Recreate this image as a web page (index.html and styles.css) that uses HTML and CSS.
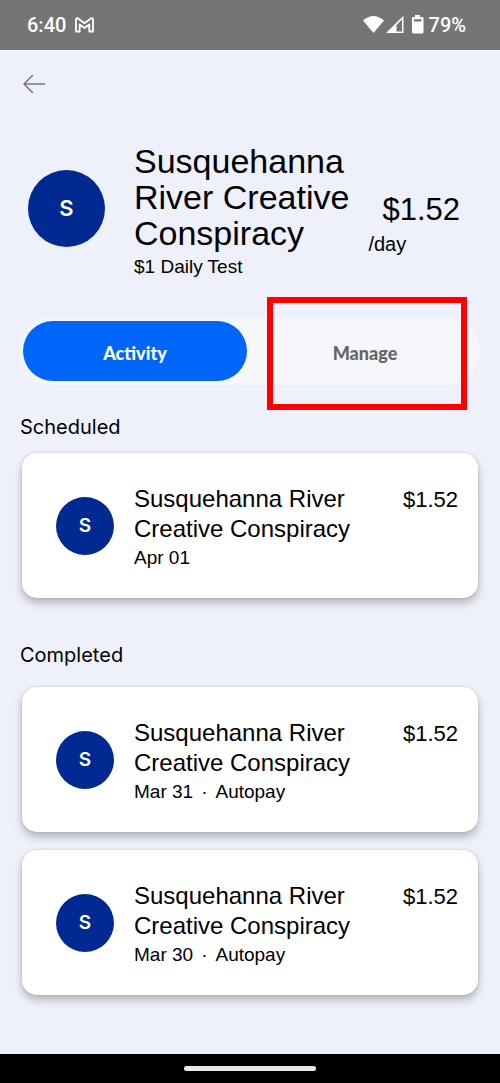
FILE: index.html
```html
<!DOCTYPE html>
<html lang="en">
<head>
<meta charset="utf-8">
<meta name="viewport" content="width=device-width, initial-scale=1">
<title>Automatic payment</title>
<link rel="stylesheet" href="styles.css">
</head>
<body>
<div class="status">
  <span>6:40</span>
  <svg class="mail" width="19" height="16" viewBox="0 0 19 16" fill="none" stroke="#fff" stroke-width="1.8" stroke-linejoin="round" aria-hidden="true"><path d="M1 3Q1 .9 2.8 1.2L9.5 6.3 16.2 1.2Q18 .9 18 3V14.5H14.3V7.4L9.5 11 4.7 7.4V14.5H1Z"/></svg>
  <svg class="signals" width="62" height="20" viewBox="0 0 62 20" fill="#fff" aria-hidden="true"><path d="M0 5.5Q10.5-3.5 21 5.5L10.5 18Z"/><path fill-rule="evenodd" d="M23 18L40.500.8V18ZM33.500 16.500H39V4.500L33.500 10Z"/><path fill-rule="evenodd" d="M52 0H57V2H59.500Q60.500 2 60.500 3V17Q60.500 18.500 59 18.500H50.500Q49 18.500 49 17V3Q49 2 50 2H52ZM51 4.200V6.500H58.500V4.200Z"/></svg>
  <span class="charge">79%</span>
</div>
<main class="page">
  <button class="back" type="button" aria-label="Back"><svg width="24" height="20" viewBox="0 0 24 20" fill="none" stroke="#777" stroke-width="1.5" stroke-linecap="round" stroke-linejoin="round" aria-hidden="true"><path d="M22.500 10H2M10.500 1.500L2 10L10.500 18.500"/></svg></button>
  <header class="summary">
    <div class="avatar avatar-large">S</div>
    <div class="merchant">
      <h1 class="title">Susquehanna River Creative Conspiracy</h1>
      <p class="detail">$1 Daily Test</p>
    </div>
    <div class="rate"><p class="rate-amount">$1.52</p><p class="period">/day</p></div>
  </header>
  <nav class="tabs" aria-label="Payment views">
    <button class="tab active" type="button">Activity</button>
    <button class="tab highlighted" type="button">Manage</button>
  </nav>
  <section class="group">
    <h2 class="label">Scheduled</h2>
    <article class="card">
      <div class="avatar">S</div>
      <div class="info"><h3 class="name">Susquehanna River Creative Conspiracy</h3><p class="detail">Apr 01</p></div>
      <p class="amount">$1.52</p>
    </article>
  </section>
  <section class="group completed">
    <h2 class="label">Completed</h2>
    <article class="card">
      <div class="avatar">S</div>
      <div class="info"><h3 class="name">Susquehanna River Creative Conspiracy</h3><p class="detail"><span>Mar 31</span><span>·</span><span>Autopay</span></p></div>
      <p class="amount">$1.52</p>
    </article>
    <article class="card">
      <div class="avatar">S</div>
      <div class="info"><h3 class="name">Susquehanna River Creative Conspiracy</h3><p class="detail"><span>Mar 30</span><span>·</span><span>Autopay</span></p></div>
      <p class="amount">$1.52</p>
    </article>
  </section>
</main>
<div class="gesture"><div class="handle"></div></div>
</body>
</html>
```
FILE: styles.css
```css
* { box-sizing: border-box; }
body {
  margin: 0;
  min-height: 100vh;
  display: flex;
  flex-direction: column;
  background: #eef1fa;
  color: #000;
  font-family: "Liberation Sans", Arial, sans-serif;
}
h1, h2, h3, p { margin: 0; font-weight: 400; }
button { border: 0; padding: 0; background: none; }
svg { display: block; }
.status {
  height: 50px;
  padding: 0 34px 0 27px;
  display: flex;
  align-items: center;
  background: #757575;
  color: #fff;
  font: 500 20px Roboto, sans-serif;
}
.mail { margin-left: 9px; }
.signals { margin-left: auto; }
.charge { margin-left: 4px; }
.page { flex: 1; padding: 22px 20px 0; }
.back { display: block; height: 24px; margin-left: 2px; }
.summary {
  display: flex;
  align-items: center;
  gap: 29px;
  margin-top: 47px;
  padding: 0 20px 0 8px;
}
.avatar {
  flex: none;
  display: grid;
  place-items: center;
  width: 58px;
  height: 58px;
  border-radius: 50%;
  background: #002991;
  color: #fff;
  font: 600 19px Inter, sans-serif;
}
.avatar-large { width: 77px; height: 77px; margin-bottom: 8px; font-size: 22px; }
.merchant { flex: 1; }
.title { font-size: 34px; line-height: 36px; }
.detail { display: flex; gap: 8px; font-size: 19px; line-height: 28px; }
.merchant .detail { padding-top: 2px; }
.rate { flex: none; margin-left: -24px; padding-top: 24px; }
.rate-amount { padding-left: 14px; font-size: 31px; line-height: 40px; }
.period { font-size: 20px; line-height: 28px; }
.tabs {
  display: flex;
  gap: 6px;
  margin-top: 36px;
  padding: 4px 3px;
  border-radius: 34px;
  background: #f6f7fb;
}
.tab {
  flex: 1;
  position: relative;
  height: 60px;
  padding-top: 4px;
  border-radius: 30px;
  color: #666;
  font: 900 18px Lato, sans-serif;
}
.active { background: #0066fa; color: #fff; }
.highlighted::after {
  content: "";
  position: absolute;
  inset: -24px 10px -29px 14px;
  border: 6px solid #f00;
}
.group { display: grid; gap: 17px; margin-top: 30px; }
.label { font: 400 20px/24px Inter, sans-serif; }
.group .label { margin-bottom: -3px; }
.completed { gap: 18px; margin-top: 45px; }
.completed .label { margin-bottom: 2px; }
.card {
  display: flex;
  align-items: center;
  gap: 20px;
  min-height: 145px;
  margin: 0 2px;
  padding: 0 20px 0 34px;
  border-radius: 15px;
  background: #fff;
  box-shadow: 0 5px 8px rgb(0 0 0 / 25%), 0 0 3px rgb(0 0 0 / 12%);
}
.info { flex: 1; padding-top: 5px; }
.name { max-width: 230px; font-size: 24px; line-height: 30px; }
.amount { align-self: flex-start; padding-top: 32px; font-size: 22px; line-height: 30px; }
.gesture { height: 29px; display: grid; place-items: center; background: #000; }
.handle { width: 132px; height: 5px; border-radius: 3px; background: #e8e8e8; }
```
